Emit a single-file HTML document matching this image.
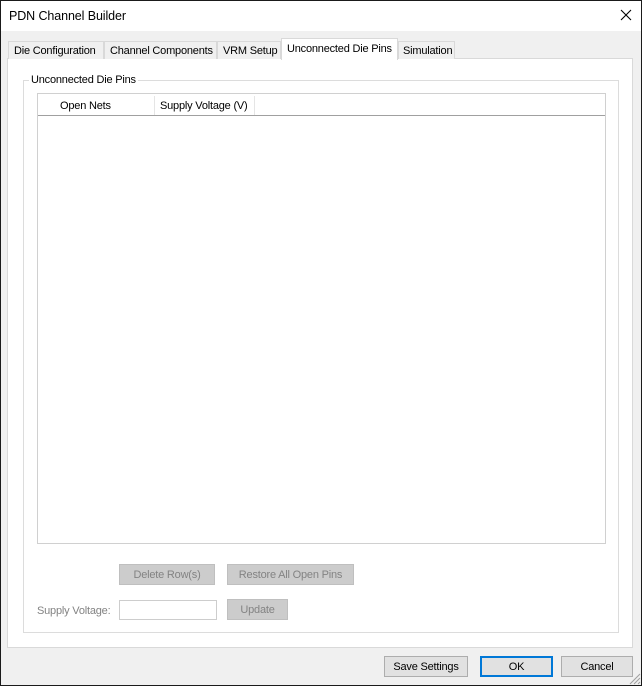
<!DOCTYPE html><html><head><style>
*{box-sizing:border-box;margin:0;padding:0}
body{width:642px;height:686px;background:#f0f0f0;font-family:"Liberation Sans",sans-serif;font-size:11px;letter-spacing:-0.2px;color:#000;position:relative;overflow:hidden}
.a{position:absolute}
.win{left:0;top:0;width:642px;height:686px;border:1px solid #1a1a1a}
.title{left:1px;top:1px;width:640px;height:30px;background:#fff}
.tab{top:41px;height:18px;border:1px solid #d9d9d9;border-bottom:none;background:#f0f0f0;padding:3px 0 0 5px;white-space:nowrap;overflow:hidden}
.btn{background:#cccccc;border:1px solid #bfbfbf;color:#838383;text-align:center;line-height:21px}
.b2{background:#e1e1e1;border:1px solid #adadad;text-align:center;line-height:21px;color:#000}
</style></head><body>
<div class="a win"></div>
<div class="a title"></div>
<div class="a" style="left:9px;top:9px;font-size:12.5px;letter-spacing:-0.1px">PDN Channel Builder</div>
<svg class="a" style="left:620px;top:9px" width="12" height="12"><path d="M1 1L11 11M11 1L1 11" stroke="#000" stroke-width="1.1"/></svg>
<div class="a" style="left:7px;top:58px;width:626px;height:590px;background:#fff;border:1px solid #d9d9d9"></div>
<div class="a tab" style="left:8px;width:96px">Die Configuration</div>
<div class="a tab" style="left:104px;width:113px">Channel Components</div>
<div class="a tab" style="left:217px;width:64px">VRM Setup</div>
<div class="a tab" style="left:398px;width:57px;padding-left:4px">Simulation</div>
<div class="a tab" style="left:281px;top:38px;width:117px;height:22px;background:#fff;padding-top:4px">Unconnected Die Pins</div>
<div class="a" style="left:23px;top:80px;width:596px;height:553px;border:1px solid #dcdcdc"></div>
<div class="a" style="left:29px;top:74px;background:#fff;padding:0 2px">Unconnected Die Pins</div>
<div class="a" style="left:37px;top:93px;width:569px;height:451px;border:1px solid #d0d0d0"></div>
<div class="a" style="left:38px;top:115px;width:567px;height:1px;background:#a0a0a0"></div>
<div class="a" style="left:154px;top:96px;width:1px;height:19px;background:#e5e5e5"></div>
<div class="a" style="left:254px;top:96px;width:1px;height:19px;background:#e5e5e5"></div>
<div class="a" style="left:60px;top:100px">Open Nets</div>
<div class="a" style="left:160px;top:100px">Supply Voltage (V)</div>
<div class="a btn" style="left:119px;top:564px;width:96px;height:21px">Delete Row(s)</div>
<div class="a btn" style="left:227px;top:564px;width:127px;height:21px">Restore All Open Pins</div>
<div class="a" style="left:37px;top:605px;color:#838383">Supply Voltage:</div>
<div class="a" style="left:119px;top:600px;width:98px;height:20px;border:1px solid #cdcdcd;background:#fff"></div>
<div class="a btn" style="left:227px;top:599px;width:61px;height:21px">Update</div>
<div class="a b2" style="left:384px;top:656px;width:84px;height:21px">Save Settings</div>
<div class="a b2" style="left:480px;top:656px;width:73px;height:21px;border:2px solid #0078d7;line-height:19px">OK</div>
<div class="a b2" style="left:561px;top:656px;width:72px;height:21px">Cancel</div>
<svg class="a" style="left:629px;top:673px" width="12" height="12"><path d="M11 1L1 11M11 5L5 11M11 9L9 11" stroke="#a0a0a0"/></svg>
</body></html>
